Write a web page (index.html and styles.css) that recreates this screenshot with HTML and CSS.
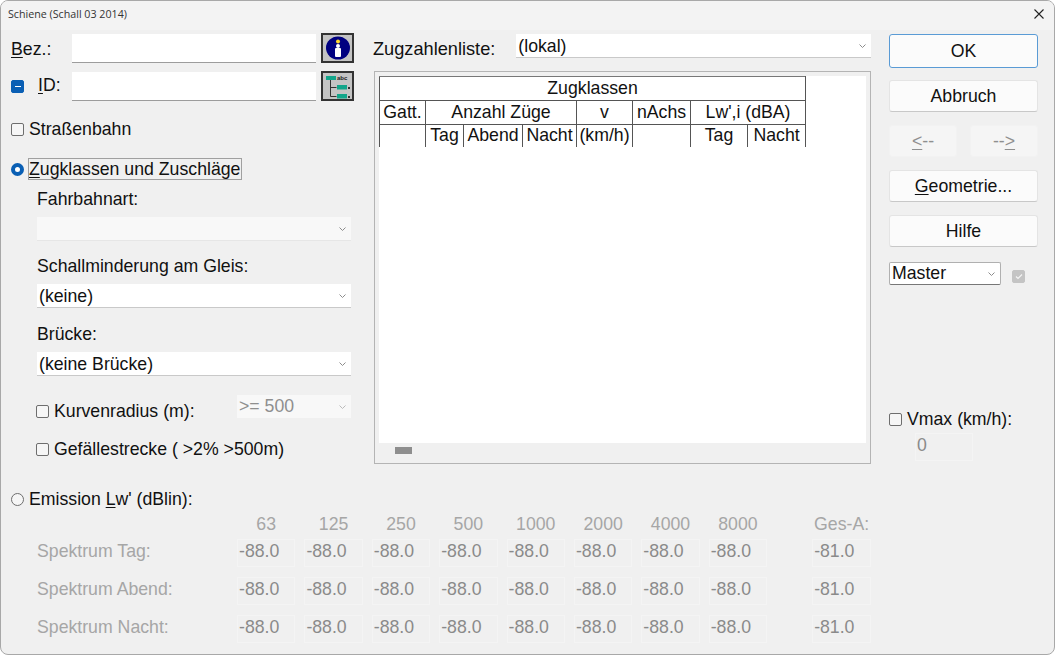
FILE: index.html
```html
<!DOCTYPE html>
<html lang="de">
<head>
    <meta charset="UTF-8">
    <title>Schiene (Schall 03 2014)</title>
    <link rel="stylesheet" href="styles.css">
</head>
<body>
    <div class="window">
        <div class="titlebar">
            <span class="title">Schiene (Schall 03 2014)</span>
            <svg class="close" width="12" height="12" viewBox="0 0 12 12"><path d="M1.5 1.5l9 9M10.5 1.5l-9 9" stroke="#222" stroke-width="1.1" fill="none"/></svg>
        </div>

        <div class="content">
            <div class="left">
                <div class="row name-row">
                    <span class="name-label"><u>B</u>ez.:</span>
                    <input class="field" type="text">
                    <button class="icon-btn">
                        <svg width="29" height="26" viewBox="0 0 29 26">
                            <ellipse cx="15" cy="13" rx="12" ry="11.5" fill="#000080"/>
                            <circle cx="15" cy="6.5" r="2" fill="#ffd92e"/>
                            <circle cx="15" cy="11" r="2" fill="#fff"/>
                            <rect x="12" y="13" width="6" height="9" rx="1" fill="#fff"/>
                        </svg>
                    </button>
                </div>
                <div class="row name-row id-row">
                    <span class="check minus"></span>
                    <span class="id-label"><u>I</u>D:</span>
                    <input class="field" type="text">
                    <button class="icon-btn">
                        <svg width="29" height="26" viewBox="0 0 29 26">
                            <rect x="3" y="3" width="10" height="4" fill="#12a58a"/>
                            <text x="14" y="7" class="icon-text">abc</text>
                            <path d="M7.5 7v16.5h6M7.5 14.5h6" stroke="#333" fill="none"/>
                            <rect x="14" y="12" width="10" height="4.5" fill="#12a58a"/>
                            <rect x="14" y="21" width="10" height="4.5" fill="#12a58a"/>
                            <rect x="25" y="14" width="2" height="2" fill="#333"/>
                            <rect x="25" y="23" width="2" height="2" fill="#333"/>
                        </svg>
                    </button>
                </div>
                <label class="row tram-row"><span class="check"></span>Straßenbahn</label>
                <label class="row classes-row"><span class="radio on"></span><span class="focus"><u>Z</u>ugklassen und Zuschläge</span></label>

                <div class="group first">Fahrbahnart:</div>
                <div class="select indent off"><span></span><svg class="chev" width="7" height="4" viewBox="0 0 7 4"><path d="M.5.5l3 3 3-3" stroke="#8c8c8c" fill="none"/></svg></div>
                <div class="group">Schallminderung am Gleis:</div>
                <div class="select indent"><span>(keine)</span><svg class="chev" width="7" height="4" viewBox="0 0 7 4"><path d="M.5.5l3 3 3-3" stroke="#8c8c8c" fill="none"/></svg></div>
                <div class="group bridge">Brücke:</div>
                <div class="select indent"><span>(keine Brücke)</span><svg class="chev" width="7" height="4" viewBox="0 0 7 4"><path d="M.5.5l3 3 3-3" stroke="#8c8c8c" fill="none"/></svg></div>

                <div class="curve-row">
                    <label class="check-label"><span class="check"></span>Kurvenradius (m):</label>
                    <div class="select small off"><span>&gt;= 500</span><svg class="chev" width="7" height="4" viewBox="0 0 7 4"><path d="M.5.5l3 3 3-3" stroke="#bbb" fill="none"/></svg></div>
                </div>
                <label class="check-label slope-row"><span class="check"></span>Gefällestrecke ( &gt;2% &gt;500m)</label>
            </div>

            <div class="middle">
                <div class="list-head">
                    <span>Zugzahlenliste:</span>
                    <div class="select wide"><span>(lokal)</span><svg class="chev" width="7" height="4" viewBox="0 0 7 4"><path d="M.5.5l3 3 3-3" stroke="#8c8c8c" fill="none"/></svg></div>
                </div>
                <div class="list-box">
                    <div class="list-inner">
                        <table class="classes">
                            <colgroup>
                                <col class="c1"><col class="c2"><col class="c3"><col class="c4"><col class="c5"><col class="c6"><col class="c7"><col class="c8">
                            </colgroup>
                            <tr><td colspan="8">Zugklassen</td></tr>
                            <tr><td>Gatt.</td><td colspan="3">Anzahl Züge</td><td>v</td><td>nAchs</td><td colspan="2">Lw',i (dBA)</td></tr>
                            <tr class="last"><td></td><td>Tag</td><td>Abend</td><td>Nacht</td><td>(km/h)</td><td></td><td>Tag</td><td>Nacht</td></tr>
                        </table>
                    </div>
                    <div class="scroll"><span class="thumb"></span></div>
                </div>
            </div>

            <div class="right">
                <button class="btn ok">OK</button>
                <button class="btn abort">Abbruch</button>
                <div class="nav">
                    <button class="btn off"><u>&lt;</u>--</button>
                    <button class="btn off">--<u>&gt;</u></button>
                </div>
                <button class="btn geo"><u>G</u>eometrie...</button>
                <button class="btn help">Hilfe</button>
                <div class="master-row">
                    <div class="select master"><span>Master</span><svg class="chev" width="7" height="4" viewBox="0 0 7 4"><path d="M.5.5l3 3 3-3" stroke="#8c8c8c" fill="none"/></svg></div>
                    <span class="check ticked"><svg width="8" height="7" viewBox="0 0 8 7"><path d="M1 3.5l2 2 4-4" stroke="#f4f4f4" stroke-width="1.2" fill="none"/></svg></span>
                </div>
                <label class="check-label vmax"><span class="check"></span>Vmax (km/h):</label>
                <input class="cell vmax-val" type="text" value="0" disabled>
            </div>

            <div class="emission">
                <label class="row emission-row"><span class="radio"></span><span>Emission <u>L</u>w' (dBlin):</span></label>
                <div class="spec spec-head">
                    <span></span><span>63</span><span>125</span><span>250</span><span>500</span><span>1000</span><span>2000</span><span>4000</span><span>8000</span><span class="ges">Ges-A:</span>
                </div>
                <div class="spec" id="spec-tag"><span class="spec-label">Spektrum Tag:</span></div>
                <div class="spec" id="spec-abend"><span class="spec-label">Spektrum Abend:</span></div>
                <div class="spec" id="spec-nacht"><span class="spec-label">Spektrum Nacht:</span></div>
            </div>
        </div>
    </div>

    <script>
        // Same eight band values and the total in all three spectrum rows
        ['spec-tag', 'spec-abend', 'spec-nacht'].forEach(function(id) {
            const row = document.getElementById(id);
            for (let i = 0; i < 9; i++) {
                const input = document.createElement('input');
                input.className = i === 8 ? 'cell ges' : 'cell';
                input.type = 'text';
                input.disabled = true;
                input.value = i === 8 ? '-81.0' : '-88.0';
                row.appendChild(input);
            }
        });
    </script>
</body>
</html>
```

FILE: styles.css
```css
* {
    margin: 0;
    padding: 0;
    box-sizing: border-box;
    font-family: "Liberation Sans", Arial, sans-serif;
}

body {
    background-color: #fff;
    color: #111;
    font-size: 17.7px;
}

u {
    text-underline-offset: 2px;
    text-decoration-thickness: 1px;
}

.window {
    width: 1055px;
    height: 655px;
    background-color: #f0f0f0;
    border: 1px solid #a8a8a8;
    border-radius: 8px;
    overflow: hidden;
}

.titlebar {
    height: 29px;
    padding: 0 9px 3px 7px;
    display: flex;
    justify-content: space-between;
    align-items: center;
    background-color: #f3f3f3;
}

.title {
    font-family: "Open Sans", sans-serif;
    font-size: 10.7px;
    color: #333;
}

.content {
    display: grid;
    grid-template-columns: 372px 498px 149px;
    column-gap: 0;
}

.left {
    padding-left: 10px;
}

.row {
    display: flex;
    align-items: center;
}

.name-row {
    height: 30px;
    margin-top: 3px;
}

.id-row {
    margin-top: 8px;
}

.name-label {
    width: 61px;
    padding-top: 2px;
}

.id-label {
    width: 34px;
    margin-left: 14px;
    padding-bottom: 2px;
}

.field {
    width: 244px;
    height: 29px;
    border: none;
    border-bottom: 1px solid #9c9c9c;
    background-color: #fff;
}

.icon-btn {
    width: 33px;
    height: 30px;
    margin-left: 5px;
    background-color: #c4c4c4;
    border: 2px solid #333;
    display: flex;
    align-items: center;
    justify-content: center;
}

.icon-text {
    font-size: 6px;
    font-weight: bold;
    fill: #222;
}

.check {
    width: 13px;
    height: 13px;
    margin-right: 5px;
    flex-shrink: 0;
    background-color: #f6f6f6;
    border: 1px solid #6e6e6e;
    border-radius: 2px;
    display: inline-flex;
    align-items: center;
    justify-content: center;
}

.check.minus {
    background-color: #0a5fb4;
    border-color: #0a5fb4;
    margin-right: 0;
}

.check.minus::after {
    content: "";
    width: 6px;
    height: 1px;
    background-color: #fff;
}

.check.ticked {
    background-color: #c4c4c4;
    border-color: #c4c4c4;
    margin: 0;
}

.radio {
    width: 13px;
    height: 13px;
    margin-right: 5px;
    flex-shrink: 0;
    border: 1px solid #6e6e6e;
    border-radius: 50%;
    background-color: #f6f6f6;
}

.radio.on {
    border: 4px solid #0a5fb4;
    background-color: #fff;
}

.tram-row {
    height: 24px;
    margin-top: 16px;
}

.classes-row {
    height: 22px;
    margin-top: 17px;
}

.focus {
    height: 22px;
    line-height: 20px;
    margin-left: -1px;
    padding-right: 1px;
    border: 1px solid #a0a0a0;
}

.group {
    height: 22px;
    line-height: 22px;
    margin: 14px 0 7px 26px;
}

.group.first {
    margin-top: 8px;
}

.group.bridge {
    margin-top: 15px;
}

.select {
    height: 24px;
    display: flex;
    justify-content: space-between;
    align-items: center;
    padding: 0 5px 0 2px;
    background-color: #fff;
    border-bottom: 1px solid #c9c9c9;
}

.indent > span,
.wide > span {
    padding-top: 2px;
}

.select.off {
    background-color: #f8f8f8;
    border-bottom-color: #e6e6e6;
    color: #8f8f8f;
}

.indent {
    width: 314px;
    margin-left: 26px;
}

.curve-row {
    display: flex;
    justify-content: space-between;
    width: 315px;
    margin: 19px 0 0 25px;
}

.check-label {
    display: flex;
    align-items: center;
    height: 22px;
}

.curve-row .check-label {
    margin-top: 5px;
}

.small {
    width: 114px;
    height: 23px;
    border-bottom: none;
}

.slope-row {
    margin: 16px 0 0 25px;
}

.list-head {
    display: flex;
    align-items: center;
    gap: 21px;
    margin-top: 4px;
    height: 24px;
}

.list-head > span {
    padding-top: 6px;
    font-size: 18.2px;
}

.wide {
    flex: 1;
}

.list-box {
    height: 393px;
    margin: 13px 0 0 1px;
    padding: 4px;
    border: 1px solid #b4b4b4;
}

.list-inner {
    height: 367px;
    background-color: #fff;
}

.classes {
    table-layout: fixed;
    width: 426px;
    border-collapse: collapse;
    border: 1px solid #555;
    border-bottom: none;
    text-align: center;
}

.classes .c1 { width: 46px; }
.classes .c2 { width: 38px; }
.classes .c3 { width: 59px; }
.classes .c4 { width: 54px; }
.classes .c5 { width: 56px; }
.classes .c6 { width: 58px; }
.classes .c7 { width: 57px; }
.classes .c8 { width: 58px; }

.classes td {
    height: 24px;
    padding: 0;
    border: 1px solid #555;
    border-top: 1px solid #777;
    white-space: nowrap;
    overflow: hidden;
}

.classes .last td {
    border-bottom: none;
    height: 22px;
}

.scroll {
    height: 11px;
    padding: 4px 0 0 16px;
}

.thumb {
    display: block;
    width: 17px;
    height: 7px;
    background-color: #8e8e8e;
}

.right {
    grid-column: 3;
    grid-row: 1 / span 2;
    margin-left: 18px;
    width: 149px;
    padding-top: 4px;
}

.btn {
    display: block;
    width: 149px;
    height: 32px;
    background-color: #fbfbfb;
    border: 1px solid #e4e4e4;
    border-bottom-color: #c8c8c8;
    border-radius: 3px;
    font-size: 17.7px;
    color: #111;
}

.ok {
    height: 34px;
    border: 1px solid #5a9bd5;
}

.abort {
    margin-top: 12px;
}

.nav {
    display: flex;
    justify-content: space-between;
    margin-top: 13px;
}

.nav .btn {
    width: 68px;
    background-color: #f5f5f5;
    border-color: #f2f2f2;
    color: #8f8f8f;
}

.geo {
    margin-top: 13px;
}

.help {
    margin-top: 13px;
}

.master-row {
    display: flex;
    align-items: center;
    gap: 11px;
    margin-top: 15px;
}

.master {
    width: 112px;
    height: 23px;
    padding-left: 2px;
    border: 1px solid #b0b0b0;
    border-bottom-color: #777;
    border-radius: 2px;
}

.master-row .check {
    margin-top: 6px;
}

.vmax {
    margin-top: 123px;
}

.vmax-val {
    display: block;
    margin: 3px 0 0 26px;
    padding-bottom: 5px;
}

.cell {
    width: 58.4px;
    height: 28px;
    padding: 0 0 3px 1px;
    background-color: #f0f0f0;
    border: 1px solid #f4f4f4;
    font-size: 17.7px;
    color: #8a8a8a;
}

.emission {
    grid-column: 1 / span 2;
    padding: 24px 0 0 10px;
}

.emission-row {
    height: 22px;
}

.spec {
    display: grid;
    grid-template-columns: 217px repeat(8, 58.4px) 95px;
    column-gap: 9px;
    margin-top: 10px;
    align-items: center;
}

.spec-head {
    height: 24px;
    margin-top: 2px;
    margin-bottom: -7px;
    color: #a6a6a6;
    text-align: center;
}

.spec .ges {
    justify-self: end;
    width: 59px;
}

.spec-label {
    padding: 0 0 3px 26px;
    color: #a6a6a6;
}
```
